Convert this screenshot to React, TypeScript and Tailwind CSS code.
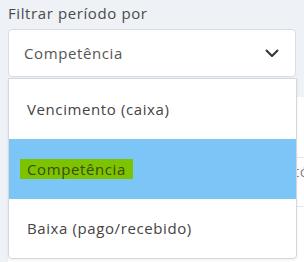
import React from "react";

export default function App() {
  const font = { fontFamily: '"Open Sans", "Noto Sans", sans-serif' };
  return (
    <div
      className="relative w-[304px] h-[262px] overflow-hidden bg-[#eef2f7] text-[15px] tracking-[0.6px]"
      style={font}
    >
      <div className="flex flex-col pl-2">
        <div className="pt-[3px] h-[29px] leading-[20px] text-[#4a4a4a]">Filtrar período por</div>
        <div className="w-[288px] h-[48px] flex items-center justify-between pl-[15px] pr-[16px] bg-white border border-[#d8dde3] rounded-[4px] text-[#555]">
          <span>Competência</span>
          <svg width="14" height="9" viewBox="0 0 14 9" fill="none">
            <path d="M1.5 1.5 L7 7 L12.5 1.5" stroke="#333" strokeWidth="2" strokeLinecap="round" strokeLinejoin="round" />
          </svg>
        </div>
        <div className="mt-[20px] w-[340px] h-[200px] bg-white flex flex-col">
          <div className="h-[61px] border-b border-[#e3e6ea]"></div>
          <div className="h-[49px] border-b border-[#e3e6ea] flex items-start pt-[3px] leading-[20px] pl-[262px] text-[#888] whitespace-nowrap">
            Histó
          </div>
          <div className="h-[60px]"></div>
        </div>
      </div>

      <div className="absolute left-2 top-[78px] w-[289px] bg-white border border-[#d3d8de] rounded-b-[4px] shadow-[0_1px_3px_rgba(0,0,0,0.08)] flex flex-col text-[#444]">
        <div className="h-[60px] flex items-center pl-[18px]">Vencimento (caixa)</div>
        <div className="h-[60px] flex items-center pl-[11px] bg-[#7cc5f7]">
          <span className="px-[7px] h-[20px] leading-[20px] bg-[#7cc400] text-[#3e4a12]">Competência</span>
        </div>
        <div className="h-[59px] flex items-center pl-[18px]">Baixa (pago/recebido)</div>
      </div>
    </div>
  );
}
